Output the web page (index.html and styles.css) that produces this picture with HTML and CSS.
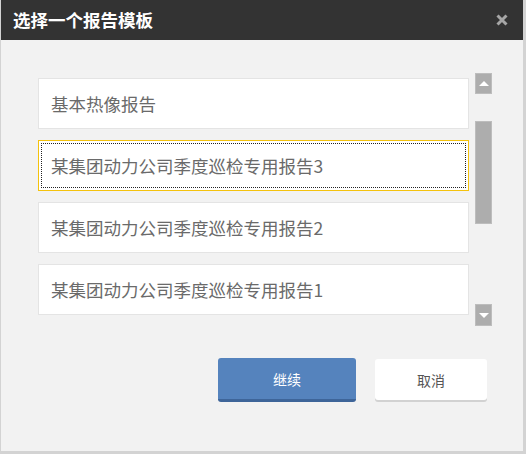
FILE: index.html
```html
<!DOCTYPE html>
<html lang="zh-CN">
<head>
    <meta charset="UTF-8">
    <title>选择一个报告模板</title>
    <link rel="stylesheet" href="styles.css">
</head>
<body>
    <div class="dialog">
        <div class="dialog-header">
            <span class="dialog-title">选择一个报告模板</span>
            <svg class="close" width="12" height="12" viewBox="0 0 12 12">
                <path d="M1.5 1.5 L10.5 10.5 M10.5 1.5 L1.5 10.5" stroke="#a6a6a6" stroke-width="3" fill="none"/>
            </svg>
        </div>
        <div class="dialog-body">
            <div class="list-wrap">
                <div class="list">
                    <div class="item">基本热像报告</div>
                    <div class="item selected"><span class="focus">某集团动力公司季度巡检专用报告3</span></div>
                    <div class="item">某集团动力公司季度巡检专用报告2</div>
                    <div class="item">某集团动力公司季度巡检专用报告1</div>
                </div>
                <div class="scrollbar">
                    <div class="sb-btn"><span class="arrow-up"></span></div>
                    <div class="sb-track">
                        <div class="sb-thumb"></div>
                    </div>
                    <div class="sb-btn"><span class="arrow-down"></span></div>
                </div>
            </div>
            <div class="actions">
                <button class="btn btn-primary">继续</button>
                <button class="btn btn-default">取消</button>
            </div>
        </div>
    </div>
</body>
</html>
```
FILE: styles.css
```css
/* Base */
body {
    margin: 0;
    background-color: #d3d3d3;
    font-family: "Noto Sans CJK SC", "Noto Sans", sans-serif;
}

.dialog {
    width: 522px;
    height: 451px;
    margin-left: 1px;
    background-color: #f2f2f2;
    display: flex;
    flex-direction: column;
}

/* Header */
.dialog-header {
    height: 40px;
    background-color: #333333;
    display: flex;
    align-items: center;
    justify-content: space-between;
    padding: 0 15px 0 12px;
    flex-shrink: 0;
}

.dialog-title {
    color: #ffffff;
    font-size: 17.5px;
    font-weight: bold;
    line-height: 1;
}

.close {
    display: block;
}

/* Template list */
.dialog-body {
    padding: 33px 31px 0 37px;
}

.list-wrap {
    display: flex;
    gap: 6px;
    height: 253px;
}

.list {
    width: 431px;
    flex-shrink: 0;
    padding-top: 5px;
    overflow: hidden;
}

.item {
    box-sizing: border-box;
    height: 51px;
    margin-bottom: 11px;
    background-color: #ffffff;
    border: 1px solid #e4e4e4;
    display: flex;
    align-items: center;
    padding-left: 12px;
    font-size: 17.5px;
    color: #6a6a6a;
}

.item.selected {
    border-color: #f4c20d;
    padding: 2px;
}

.item.selected .focus {
    box-sizing: border-box;
    width: 100%;
    height: 100%;
    border: 1px dotted #222222;
    display: flex;
    align-items: center;
    padding-left: 9px;
}

/* Scrollbar */
.scrollbar {
    width: 17px;
    flex-shrink: 0;
    display: flex;
    flex-direction: column;
}

.sb-btn {
    box-sizing: border-box;
    height: 21px;
    background-color: #adadad;
    border: 1px solid #bdbdbd;
    display: flex;
    align-items: center;
    justify-content: center;
    flex-shrink: 0;
}

.sb-btn:last-child {
    height: 22px;
}

.arrow-up {
    width: 0;
    height: 0;
    border-left: 5px solid transparent;
    border-right: 5px solid transparent;
    border-bottom: 5px solid #ffffff;
}

.arrow-down {
    width: 0;
    height: 0;
    border-left: 5px solid transparent;
    border-right: 5px solid transparent;
    border-top: 5px solid #ffffff;
}

.sb-track {
    flex: 1;
    padding-top: 27px;
}

.sb-thumb {
    box-sizing: border-box;
    height: 103px;
    background-color: #adadad;
    border: 1px solid #bdbdbd;
}

/* Buttons */
.actions {
    display: flex;
    justify-content: flex-end;
    align-items: flex-start;
    gap: 19px;
    margin-top: 32px;
    padding-right: 5px;
}

.btn {
    font-family: "Noto Sans CJK SC", "Noto Sans", sans-serif;
    font-size: 14px;
    border: none;
    border-radius: 3px;
    cursor: pointer;
}

.btn-primary {
    width: 138px;
    height: 44px;
    background-color: #5583bd;
    border-bottom: 3px solid #3e6599;
    color: #ffffff;
    padding-top: 2px;
}

.btn-default {
    width: 112px;
    height: 41px;
    margin-top: 1px;
    background-color: #ffffff;
    box-shadow: 0 2px 0 #d2d2d2;
    color: #555555;
}
```
